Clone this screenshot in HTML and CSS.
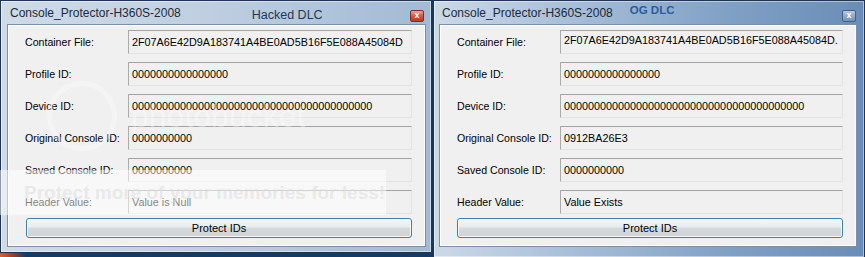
FILE: index.html
```html
<!DOCTYPE html>
<html lang="en">

<head>
  <meta charset="UTF-8">
  <meta name="viewport" content="width=device-width, initial-scale=1.0">
  <title>Console_Protector-H360S-2008</title>
  <link rel="stylesheet" href="styles.css">
</head>

<body>
  <div class="desktop">
    <div class="window window-hacked">
      <div class="titlebar">
        <span class="title">Console_Protector-H360S-2008</span>
        <span class="note note-hacked">Hacked DLC</span>
        <button class="close close-red">x</button>
      </div>
      <div class="client">
        <div class="row">
          <label>Container File:</label>
          <div class="field">2F07A6E42D9A183741A4BE0AD5B16F5E088A45084D</div>
        </div>
        <div class="row">
          <label>Profile ID:</label>
          <div class="field">0000000000000000</div>
        </div>
        <div class="row">
          <label>Device ID:</label>
          <div class="field">0000000000000000000000000000000000000000</div>
        </div>
        <div class="row">
          <label>Original Console ID:</label>
          <div class="field">0000000000</div>
        </div>
        <div class="row">
          <label>Saved Console ID:</label>
          <div class="field">0000000000</div>
        </div>
        <div class="row">
          <label>Header Value:</label>
          <div class="field">Value is Null</div>
        </div>
        <button class="protect">Protect IDs</button>
      </div>

      <!-- photobucket watermark -->
      <div class="wm-logo">
        <span class="wm-ring"></span>
        <span class="wm-word">photobucket</span>
      </div>
      <div class="wm-band">Protect more of your memories for less!</div>
    </div>

    <div class="window window-og">
      <div class="titlebar">
        <span class="title">Console_Protector-H360S-2008</span>
        <span class="note note-og">OG DLC</span>
        <button class="close close-blue">x</button>
      </div>
      <div class="client">
        <div class="row">
          <label>Container File:</label>
          <div class="field field-multi">2F07A6E42D9A183741A4BE0AD5B16F5E088A45084D.</div>
        </div>
        <div class="row">
          <label>Profile ID:</label>
          <div class="field">0000000000000000</div>
        </div>
        <div class="row">
          <label>Device ID:</label>
          <div class="field">0000000000000000000000000000000000000000</div>
        </div>
        <div class="row">
          <label>Original Console ID:</label>
          <div class="field">0912BA26E3</div>
        </div>
        <div class="row">
          <label>Saved Console ID:</label>
          <div class="field">0000000000</div>
        </div>
        <div class="row">
          <label>Header Value:</label>
          <div class="field">Value Exists</div>
        </div>
        <button class="protect">Protect IDs</button>
      </div>
    </div>
  </div>
</body>

</html>
```

FILE: styles.css
```css
body {
  margin: 0;
  padding: 0;
  background: radial-gradient(circle at 0 100%, #e0642e 0, #b8401e 10px, rgba(20, 50, 90, 0) 26px), #163a62;
  font-family: 'Liberation Sans', Arial, sans-serif;
  overflow: hidden;
}

.desktop {
  display: flex;
  align-items: flex-start;
  gap: 1px;
  width: 865px;
  height: 257px;
}

.window {
  position: relative;
  box-sizing: border-box;
  border: 1px solid #1f3552;
  padding: 0 6px 5px 6px;
  box-shadow: inset 0 0 0 1px rgba(255, 255, 255, 0.45);
}

.window-hacked {
  width: 432px;
  height: 253px;
  padding-right: 5px;
  background: linear-gradient(90deg, #cfdbe7 0, #c0d0e1 45%, #a2bad4 100%);
}

.window-og {
  width: 432px;
  height: 258px;
  padding: 0 7px 5px 5px;
  background: linear-gradient(90deg, #ccd9e7 0, #a9c0d9 30%, #7f9fc4 70%, #6a8db7 100%);
}

.titlebar {
  display: flex;
  align-items: center;
  height: 23px;
  padding-left: 3px;
}

.title {
  font-size: 12px;
  color: #1b2a3c;
}

.note-hacked {
  margin-left: 71px;
  margin-top: 4px;
  font-size: 12.5px;
  color: #23395a;
}

.note-og {
  margin-left: 17px;
  margin-top: -5px;
  font-size: 11.5px;
  font-weight: bold;
  color: #2a5c98;
}

.close {
  margin-left: auto;
  margin-top: 6px;
  width: 14px;
  height: 12px;
  padding: 0;
  border-radius: 2px;
  font-family: 'Liberation Sans', Arial, sans-serif;
  font-size: 9px;
  font-weight: bold;
  line-height: 9px;
  color: #fff;
  cursor: pointer;
}

.close-red {
  margin-right: 2px;
  border: 1px solid #7a2e25;
  background: linear-gradient(#e6a697, #cc5a47 50%, #b83a2a);
}

.close-blue {
  margin-right: 1px;
  border: 1px solid #42618a;
  background: linear-gradient(#b9cbe0, #8ea9c9 50%, #7493bb);
}

.client {
  display: flex;
  flex-direction: column;
  gap: 8px;
  height: 223px;
  box-sizing: border-box;
  padding: 5px 13px 8px 0;
  background-color: #f0f0f0;
  border: 1px solid #7d8fa6;
  box-shadow: inset 0 0 0 1px #fff;
}

.row {
  display: grid;
  grid-template-columns: 120px 1fr;
  align-items: center;
  height: 24px;
}

label {
  padding-left: 17px;
  font-size: 10.6px;
  color: #000;
}

.field {
  box-sizing: border-box;
  height: 24px;
  padding: 0 3px;
  display: flex;
  align-items: center;
  font-size: 10.8px;
  color: #000;
  background-color: #f0f0f0;
  border-top: 1px solid #a3a3a3;
  border-left: 1px solid #ababab;
  border-right: 1px solid #e4e4e4;
  border-bottom: 1px solid #e4e4e4;
}

.field-multi {
  align-items: flex-start;
  padding-top: 3px;
}

.protect {
  margin: -4px 0 0 18px;
  height: 20px;
  padding: 0;
  border: 1px solid #3d7fae;
  border-radius: 3px;
  background: linear-gradient(#f4f6f7 0, #e9ecee 45%, #d6dadd 50%, #cfd3d6 100%);
  box-shadow: inset 0 0 0 1px rgba(255, 255, 255, 0.8);
  font-family: 'Liberation Sans', Arial, sans-serif;
  font-size: 11px;
  color: #000;
  cursor: pointer;
}

.window-og .protect {
  margin-left: 17px;
}

/* watermark over the left window */
.wm-logo {
  position: absolute;
  left: 46px;
  top: 80px;
  display: flex;
  align-items: center;
  gap: 14px;
  pointer-events: none;
}

.wm-ring {
  width: 70px;
  height: 70px;
  border-radius: 50%;
  border: 5px solid rgba(255, 255, 255, 0.3);
  box-sizing: border-box;
}

.wm-word {
  font-family: 'Liberation Sans', Arial, sans-serif;
  font-size: 32px;
  color: rgba(255, 255, 255, 0.35);
}

.wm-band {
  position: absolute;
  left: -1px;
  top: 169px;
  width: 386px;
  height: 45px;
  box-sizing: border-box;
  padding: 12px 0 0 24px;
  background-color: rgba(255, 255, 255, 0.5);
  font-family: 'Liberation Sans', Arial, sans-serif;
  font-size: 19px;
  font-weight: bold;
  color: rgba(220, 220, 220, 0.55);
  white-space: nowrap;
  pointer-events: none;
}
```
